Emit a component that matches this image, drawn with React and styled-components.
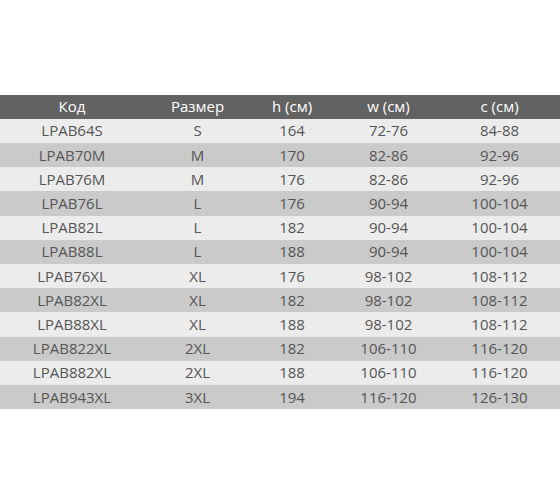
import React from "react";
import styled, { createGlobalStyle } from "styled-components";

const Global = createGlobalStyle`
  html, body { margin: 0; padding: 0; background: #ffffff; }
  body { font-family: "Open Sans", "Liberation Sans", sans-serif; }
`;

const Page = styled.div`
  width: 560px;
  height: 504px;
  display: flex;
  flex-direction: column;
  justify-content: center;
`;

const Table = styled.div`
  display: flex;
  flex-direction: column;
  width: 560px;
`;

const Row = styled.div`
  display: grid;
  grid-template-columns: 144px 107px 82px 111px 1fr;
  height: ${(p) => (p.$head ? "24px" : "24.2px")};
  align-items: center;
  background: ${(p) => (p.$head ? "#626262" : p.$alt ? "#cacaca" : "#ececec")};
  color: ${(p) => (p.$head ? "#ffffff" : "#555555")};
  font-size: 15px;
  font-weight: ${(p) => (p.$head ? 500 : 400)};
  line-height: 1;
`;

const Cell = styled.div`
  text-align: center;
  white-space: nowrap;
  &:last-child { padding-right: 5px; }
`;

const head = ["Код", "Размер", "h (см)", "w (см)", "c (см)"];
const data = [
  ["LPAB64S", "S", "164", "72-76", "84-88"],
  ["LPAB70M", "M", "170", "82-86", "92-96"],
  ["LPAB76M", "M", "176", "82-86", "92-96"],
  ["LPAB76L", "L", "176", "90-94", "100-104"],
  ["LPAB82L", "L", "182", "90-94", "100-104"],
  ["LPAB88L", "L", "188", "90-94", "100-104"],
  ["LPAB76XL", "XL", "176", "98-102", "108-112"],
  ["LPAB82XL", "XL", "182", "98-102", "108-112"],
  ["LPAB88XL", "XL", "188", "98-102", "108-112"],
  ["LPAB822XL", "2XL", "182", "106-110", "116-120"],
  ["LPAB882XL", "2XL", "188", "106-110", "116-120"],
  ["LPAB943XL", "3XL", "194", "116-120", "126-130"],
];

export default function App() {
  return (
    <>
      <Global />
      <Page>
        <Table>
          <Row $head>
            {head.map((h) => (
              <Cell key={h}>{h}</Cell>
            ))}
          </Row>
          {data.map((r, i) => (
            <Row key={r[0]} $alt={i % 2 === 1}>
              {r.map((c, j) => (
                <Cell key={j}>{c}</Cell>
              ))}
            </Row>
          ))}
        </Table>
      </Page>
    </>
  );
}
